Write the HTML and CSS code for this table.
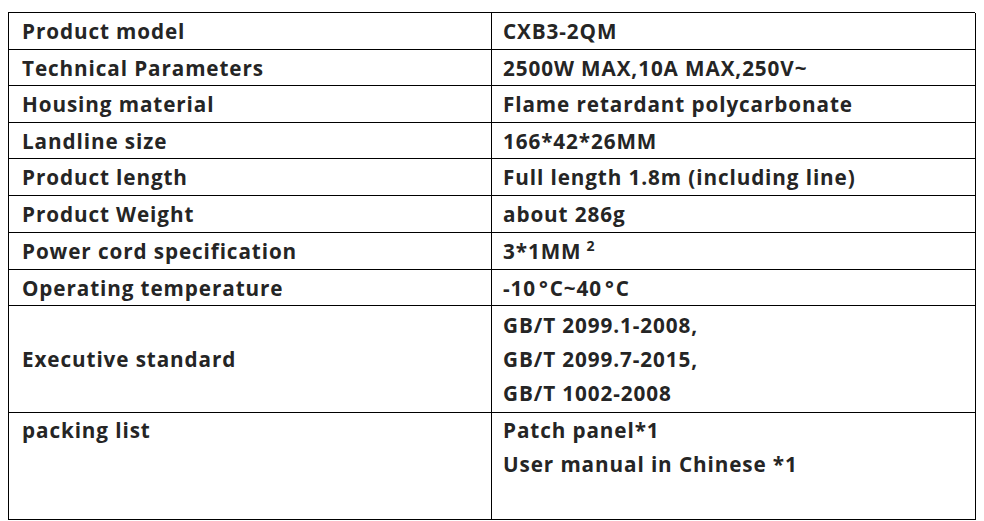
FILE: index.html
```html
<!DOCTYPE html>
<html>
<head>
<meta charset="utf-8">
<link rel="stylesheet" href="styles.css">
</head>
<body>
<div class="spec">
  <div class="cell r1"><div>Product model</div></div><div class="cell val r1"><div>CXB3-2QM</div></div>
  <div class="cell r2"><div>Technical Parameters</div></div><div class="cell val r2"><div>2500W MAX,10A MAX,250V~</div></div>
  <div class="cell r1"><div>Housing material</div></div><div class="cell val r1"><div>Flame retardant polycarbonate</div></div>
  <div class="cell r2"><div>Landline size</div></div><div class="cell val r2"><div>166*42*26MM</div></div>
  <div class="cell r1"><div>Product length</div></div><div class="cell val r1"><div>Full length 1.8m (including line)</div></div>
  <div class="cell r1"><div>Product Weight</div></div><div class="cell val r1"><div>about 286g</div></div>
  <div class="cell r1"><div>Power cord specification</div></div><div class="cell val r1"><div>3*1MM<span class="sq">2</span></div></div>
  <div class="cell r2"><div>Operating temperature</div></div><div class="cell val r2"><div>-10<span class="deg">°</span>C~40<span class="deg">°</span>C</div></div>
  <div class="cell big"><div>Executive standard</div></div>
  <div class="cell val big"><div>GB/T 2099.1-2008,</div><div>GB/T 2099.7-2015,</div><div>GB/T 1002-2008</div></div>
  <div class="cell big top"><div>packing list</div></div>
  <div class="cell val big top"><div>Patch panel*1</div><div>User manual in Chinese *1</div></div>
</div>
</body>
</html>
```

FILE: styles.css
```css
html, body {
  margin: 0;
  padding: 0;
  background: #fff;
}
body {
  padding: 12px 0 0 8px;
  font-family: "Open Sans", "Liberation Sans", sans-serif;
  font-weight: 700;
  font-size: 20.7px;
  letter-spacing: 0.9px;
  color: #252525;
}
.spec {
  display: grid;
  grid-template-columns: 483px 484px;
  width: 967px;
  border-top: 1px solid #000;
  border-left: 1px solid #000;
  box-sizing: border-box;
}
.cell {
  box-sizing: border-box;
  border-right: 1px solid #000;
  border-bottom: 1px solid #000;
  padding-left: 13px;
  display: flex;
  flex-direction: column;
  justify-content: center;
  line-height: 34px;
  white-space: nowrap;
}
.cell.val {
  padding-left: 11px;
}
.r1 { height: 37px; }
.r2 { height: 36px; }
.big { height: 107px; }
.top { justify-content: flex-start; }
.sq {
  font-size: 0.68em;
  vertical-align: 0.6em;
  line-height: 0;
  margin-left: 5px;
}
.deg {
  margin: 0 1px 0 3px;
}
```
